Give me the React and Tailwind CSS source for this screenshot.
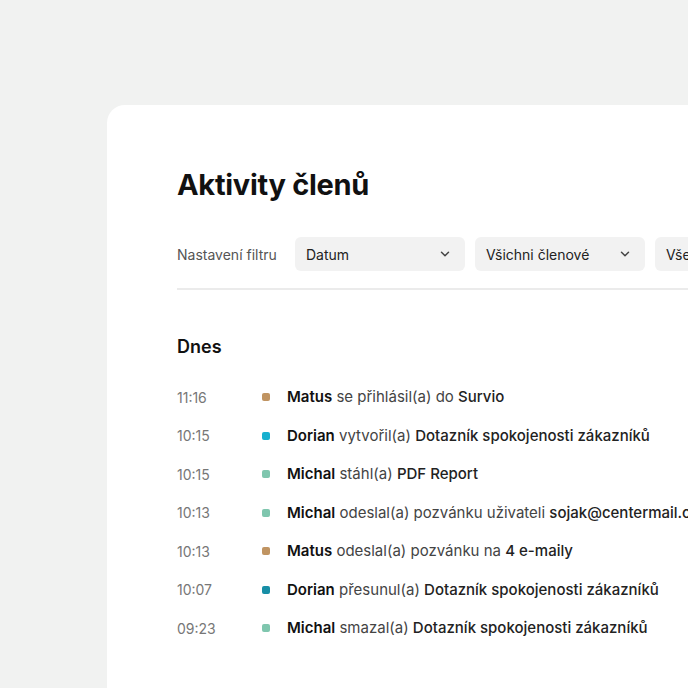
import { ChevronDown } from "lucide-react";

const filters = ["Datum", "Všichni členové", "Všechny aktivity"];

const colors = {
  matus: "bg-[#c09462]",
  dorian: "bg-[#17b0cf]",
  dorian2: "bg-[#178ea6]",
  michal: "bg-[#7fc6ae]",
};

const rows = [
  { time: "11:16", dot: colors.matus, name: "Matus", action: "se přihlásil(a) do", object: "Survio" },
  { time: "10:15", dot: colors.dorian, name: "Dorian", action: "vytvořil(a)", object: "Dotazník spokojenosti zákazníků" },
  { time: "10:15", dot: colors.michal, name: "Michal", action: "stáhl(a)", object: "PDF Report" },
  { time: "10:13", dot: colors.michal, name: "Michal", action: "odeslal(a) pozvánku uživateli", object: "sojak@centermail.com" },
  { time: "10:13", dot: colors.matus, name: "Matus", action: "odeslal(a) pozvánku na", object: "4 e-maily" },
  { time: "10:07", dot: colors.dorian2, name: "Dorian", action: "přesunul(a)", object: "Dotazník spokojenosti zákazníků" },
  { time: "09:23", dot: colors.michal, name: "Michal", action: "smazal(a)", object: "Dotazník spokojenosti zákazníků" },
];

function Select({ label }) {
  return (
    <div className="flex h-[34px] w-[170px] shrink-0 items-center justify-between rounded-md bg-[#f2f2f2] pl-[11px] pr-[13px]">
      <span className="text-[14px] text-[#222] whitespace-nowrap">{label}</span>
      <ChevronDown size={14} strokeWidth={2.5} className="text-[#444]" />
    </div>
  );
}

export default function App() {
  return (
    <div
      className="h-[688px] w-[688px] overflow-hidden bg-[#f1f2f1] pl-[107px] pt-[105px]"
      style={{ fontFamily: "Inter, 'Noto Sans', sans-serif" }}
    >
      <div className="h-[700px] w-[900px] rounded-tl-[18px] bg-white pl-[70px] pt-[62px]">
        <h1 className="text-[29px] font-bold leading-[36px] tracking-[-0.01em] text-[#111]">
          Aktivity členů
        </h1>

        <div className="mt-[34px] flex items-center">
          <span className="w-[118px] shrink-0 text-[14px] text-[#555]">Nastavení filtru</span>
          <div className="flex gap-[10px]">
            {filters.map((f) => (
              <Select key={f} label={f} />
            ))}
          </div>
        </div>

        <div className="mt-[17px] h-[2px] w-[600px] bg-[#ebebeb]" />

        <h2 className="mt-[45px] text-[18px] font-semibold leading-[24px] text-[#111]">Dnes</h2>

        <div className="mt-[19px] flex flex-col">
          {rows.map((r, i) => (
            <div key={i} className="flex h-[38.5px] items-center whitespace-nowrap">
              <span className="w-[85px] shrink-0 text-[14px] text-[#777]">{r.time}</span>
              <span className={`h-[8px] w-[8px] shrink-0 rounded-[2px] ${r.dot}`} />
              <span className="ml-[17px] text-[15px] text-[#444]">
                <span className="font-semibold text-[#111]">{r.name}</span> {r.action}{" "}
                <span className="font-medium text-[#222]">{r.object}</span>
              </span>
            </div>
          ))}
        </div>
      </div>
    </div>
  );
}
